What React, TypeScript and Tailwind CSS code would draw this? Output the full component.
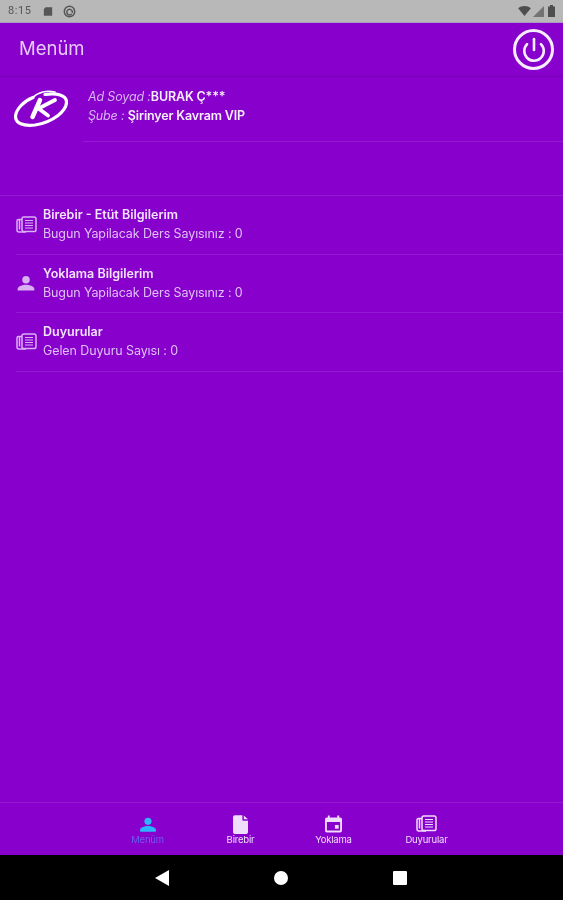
import { Power } from 'lucide-react';

const font = "font-['Inter','Noto_Sans',sans-serif]";

const rows = [
  { title: 'Birebir - Etüt Bilgilerim', sub: 'Bugun Yapilacak Ders Sayısınız : 0', icon: 'news' },
  { title: 'Yoklama Bilgilerim', sub: 'Bugun Yapilacak Ders Sayısınız : 0', icon: 'user' },
  { title: 'Duyurular', sub: 'Gelen Duyuru Sayısı : 0', icon: 'news' },
];

const PersonIcon = ({ className }: { className?: string }) => (
  <svg viewBox="0 0 24 24" className={className} fill="currentColor">
    <circle cx="12" cy="8" r="4.500" />
    <path d="M12 14c-4.500 0-10 2-10 5v2h20v-2c0-3-5.500-5-10-5z" />
  </svg>
);

// front sheet with text lines and a second sheet tucked behind on the left
const NewsIcon = ({ className }: { className?: string }) => (
  <svg viewBox="0 0 21 17" className={className} fill="none" stroke="currentColor" strokeWidth="1.500">
    <rect x="6" y="1" width="14" height="14.500" rx="1.800" />
    <path d="M6 3.500H2.500A1.500 1.500 0 0 0 1 5v9a2 2 0 0 0 2 2h7" />
    <path d="M3.500 4v9.500" />
    <path d="M9 4.500h8M9 7h8M9 9.500h8M9 12h8" strokeWidth="1.200" />
  </svg>
);

const DocIcon = ({ className }: { className?: string }) => (
  <svg viewBox="0 0 16 20" className={className} fill="currentColor">
    <path d="M2 0h8v5a1 1 0 0 0 1 1h5v12a2 2 0 0 1-2 2H2a2 2 0 0 1-2-2V2a2 2 0 0 1 2-2z" />
    <path d="M11.500 0.500L16 4.500h-4.500z" />
  </svg>
);

const CalendarIcon = ({ className }: { className?: string }) => (
  <svg viewBox="0 0 18 18" className={className} fill="currentColor">
    <path fillRule="evenodd" d="M3 0h2v2h8V0h2v2h1a2 2 0 0 1 2 2v12a2 2 0 0 1-2 2H2a2 2 0 0 1-2-2V4a2 2 0 0 1 2-2h1zM2 7v9h14V7z" />
    <rect x="10.500" y="10" width="4" height="4" />
  </svg>
);

const StatusBar = () => (
  <div className="flex h-[23px] items-center justify-between border-b border-[#a99bc4] bg-[#b8b8b8] px-[8px]">
    <div className="flex items-center gap-[11px] text-[#565656]">
      <span className="font-['Roboto',sans-serif] text-[11px] tracking-[0.6px]">8:15</span>
      <svg viewBox="0 0 12 12" className="h-[11px] w-[10px]" fill="currentColor">
        <path d="M3 1h8v10H1V3z" />
      </svg>
      <svg viewBox="0 0 14 14" className="-ml-[1px] h-[13px] w-[13px]" fill="none" stroke="currentColor" strokeWidth="1.600">
        <circle cx="7" cy="7" r="5.600" />
        <path d="M9.500 9.500A3 3 0 1 1 10 7v1.500" />
      </svg>
    </div>
    <div className="flex items-center gap-[2px] text-[#4e4e4e]">
      <svg viewBox="0 0 14 11" className="h-[10px] w-[13px]" fill="currentColor">
        <path d="M0 2.500C4-.8 10-.8 14 2.500L7 11z" />
      </svg>
      <svg viewBox="0 0 11 11" className="h-[11px] w-[11px]" fill="currentColor">
        <path d="M11 0v11H0z" opacity="0.65" />
      </svg>
      <svg viewBox="0 0 7 12" className="ml-[2px] h-[12px] w-[7px]" fill="currentColor">
        <path d="M2 0h3v1.500h2V12H0V1.500h2z" />
      </svg>
    </div>
  </div>
);

const Logo = () => (
  <svg viewBox="0 0 54 38" className="h-[38px] w-[54px]" fill="none" stroke="white" strokeLinecap="round">
    <path d="M31 5.500C43 3.500 52 6.500 52.500 12.500C53 22 39 33 21 36C9 37.500 1.500 34 1.500 27.500C2 20 10 12 19 8.500" strokeWidth="3.200" />
    <path d="M19 8.500C24 3 33 1 41 3" strokeWidth="1.600" />
    <path d="M26 11L18.500 28" strokeWidth="4.500" />
    <path d="M41 11L24.500 19.500L34 26.500" strokeWidth="3.800" />
  </svg>
);

const TabItem = ({ label, active, children }: { label: string; active?: boolean; children: React.ReactNode }) => (
  <div className={`flex h-[31px] w-[93px] flex-col items-center justify-between ${active ? 'text-[#2cb4ff]' : 'text-[#f0dcfb]'}`}>
    {children}
    <span className={`text-[9.500px] leading-[12px] tracking-[-0.2px] ${active ? 'text-[#6f5cf0]' : ''}`}>{label}</span>
  </div>
);

export default function App() {
  return (
    <div className={`flex h-[900px] w-[563px] flex-col overflow-hidden bg-[#8700cc] blur-[0.4px] ${font}`}>
      <StatusBar />

      <header className="flex h-[54px] items-center justify-between border-b border-[#7a00b8] pb-[1px] pl-[19px] pr-[9px]">
        <span className="text-[18.500px] text-[#e6c9f8]">Menüm</span>
        <div className="mt-[1px] flex h-[41px] w-[41px] items-center justify-center rounded-full border-[3px] border-[#f6ecfc]">
          <Power className="h-[26px] w-[26px] text-[#f6ecfc]" strokeWidth={2.400} />
        </div>
      </header>

      <section className="flex h-[119px] border-b border-[#9419d3] pl-[14px]">
        <div className="mt-[12px] w-[69px]">
          <Logo />
        </div>
        <div className="flex-1">
          <div className="h-[65px] border-b border-[#9419d3] pt-[11px] pl-[5px] text-[12.500px] leading-[18.500px] tracking-[-0.15px]">
            <div>
              <span className="italic text-[#d9b2f2]">Ad Soyad :</span>
              <span className="font-semibold text-[#f8effd]">BURAK Ç***</span>
            </div>
            <div>
              <span className="italic text-[#d9b2f2]">Şube : </span>
              <span className="font-semibold text-[#f8effd]">Şirinyer Kavram VIP</span>
            </div>
          </div>
        </div>
      </section>

      <ul className="pl-[16px]">
        {rows.map(row => (
          <li key={row.title} className="flex h-[58.500px] items-center border-b border-[#9419d3]">
            <div className="flex w-[27px] shrink-0 items-center text-[#d9b0f2]">
              {row.icon === 'news'
                ? <NewsIcon className="h-[17px] w-[21px]" />
                : <PersonIcon className="h-[20px] w-[20px]" />}
            </div>
            <div className="pb-[1px] text-[12.500px] leading-[19px]">
              <div className="font-semibold text-[#f3e3fb]">{row.title}</div>
              <div className="tracking-[-0.1px] text-[#dfc0f4]">{row.sub}</div>
            </div>
          </li>
        ))}
      </ul>

      <div className="flex-1" />

      <nav className="flex h-[53px] justify-center border-t border-[#9419d3] pl-[11px] pt-[12px]">
        <TabItem label="Menüm" active><PersonIcon className="h-[20px] w-[20px]" /></TabItem>
        <TabItem label="Birebir"><DocIcon className="h-[19px] w-[15px]" /></TabItem>
        <TabItem label="Yoklama"><CalendarIcon className="h-[18px] w-[17px]" /></TabItem>
        <TabItem label="Duyurular"><NewsIcon className="h-[17px] w-[21px]" /></TabItem>
      </nav>

      <div className="flex h-[45px] items-center justify-center gap-[105px] bg-black pr-[1px]">
        <svg viewBox="0 0 14 16" className="h-[16px] w-[14px]" fill="white"><path d="M14 0v16L0 8z" /></svg>
        <div className="h-[14px] w-[14px] rounded-full bg-white" />
        <div className="h-[14px] w-[14px] rounded-[1px] bg-white" />
      </div>
    </div>
  );
}
